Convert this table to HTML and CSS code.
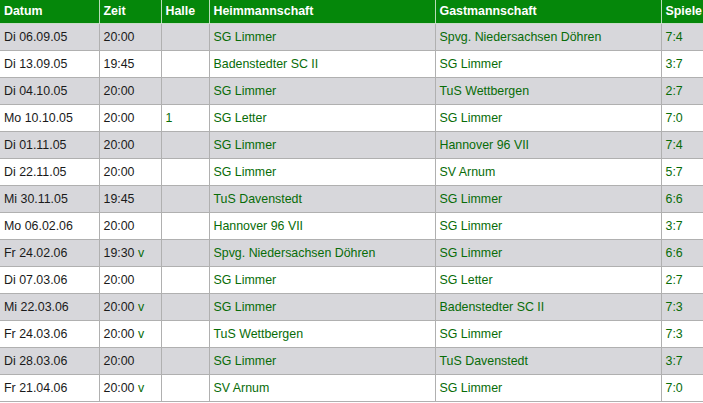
FILE: index.html
```html
<!DOCTYPE html>
<html>
<head>
<meta charset="utf-8">
<link rel="stylesheet" href="styles.css">
</head>
<body>
<div class="wrap">
<table class="games">
<colgroup>
<col class="c-date"><col class="c-time"><col class="c-hall"><col class="c-home"><col class="c-away"><col class="c-score">
</colgroup>
<thead>
<tr><th>Datum</th><th>Zeit</th><th>Halle</th><th>Heimmannschaft</th><th>Gastmannschaft</th><th>Spiele</th></tr>
</thead>
<tbody>
<tr class="alt"><td>Di 06.09.05</td><td>20:00</td><td></td><td class="g">SG Limmer</td><td class="g">Spvg. Niedersachsen Döhren</td><td class="g">7:4</td></tr>
<tr><td>Di 13.09.05</td><td>19:45</td><td></td><td class="g">Badenstedter SC II</td><td class="g">SG Limmer</td><td class="g">3:7</td></tr>
<tr class="alt"><td>Di 04.10.05</td><td>20:00</td><td></td><td class="g">SG Limmer</td><td class="g">TuS Wettbergen</td><td class="g">2:7</td></tr>
<tr><td>Mo 10.10.05</td><td>20:00</td><td class="g">1</td><td class="g">SG Letter</td><td class="g">SG Limmer</td><td class="g">7:0</td></tr>
<tr class="alt"><td>Di 01.11.05</td><td>20:00</td><td></td><td class="g">SG Limmer</td><td class="g">Hannover 96 VII</td><td class="g">7:4</td></tr>
<tr><td>Di 22.11.05</td><td>20:00</td><td></td><td class="g">SG Limmer</td><td class="g">SV Arnum</td><td class="g">5:7</td></tr>
<tr class="alt"><td>Mi 30.11.05</td><td>19:45</td><td></td><td class="g">TuS Davenstedt</td><td class="g">SG Limmer</td><td class="g">6:6</td></tr>
<tr><td>Mo 06.02.06</td><td>20:00</td><td></td><td class="g">Hannover 96 VII</td><td class="g">SG Limmer</td><td class="g">3:7</td></tr>
<tr class="alt"><td>Fr 24.02.06</td><td>19:30 <span class="g">v</span></td><td></td><td class="g">Spvg. Niedersachsen Döhren</td><td class="g">SG Limmer</td><td class="g">6:6</td></tr>
<tr><td>Di 07.03.06</td><td>20:00</td><td></td><td class="g">SG Limmer</td><td class="g">SG Letter</td><td class="g">2:7</td></tr>
<tr class="alt"><td>Mi 22.03.06</td><td>20:00 <span class="g">v</span></td><td></td><td class="g">SG Limmer</td><td class="g">Badenstedter SC II</td><td class="g">7:3</td></tr>
<tr><td>Fr 24.03.06</td><td>20:00 <span class="g">v</span></td><td></td><td class="g">TuS Wettbergen</td><td class="g">SG Limmer</td><td class="g">7:3</td></tr>
<tr class="alt"><td>Di 28.03.06</td><td>20:00</td><td></td><td class="g">SG Limmer</td><td class="g">TuS Davenstedt</td><td class="g">3:7</td></tr>
<tr><td>Fr 21.04.06</td><td>20:00 <span class="g">v</span></td><td></td><td class="g">SV Arnum</td><td class="g">SG Limmer</td><td class="g">7:0</td></tr>
</tbody>
</table>
</div>
</body>
</html>
```

FILE: styles.css
```css
html, body {
  margin: 0;
  padding: 0;
  background: #ffffff;
}
.wrap {
  width: 703px;
  height: 403px;
  overflow: hidden;
}
.games {
  border-collapse: collapse;
  table-layout: fixed;
  width: 740px;
  font-family: "Liberation Sans", Arial, sans-serif;
  font-size: 12.4px;
  color: #1a1a1a;
}
.c-date { width: 99px; }
.c-time { width: 62px; }
.c-hall { width: 48px; }
.c-home { width: 226px; }
.c-away { width: 226px; }
.c-score { width: 79px; }
.games th {
  background: #05870a;
  color: #ffffff;
  font-weight: bold;
  text-align: left;
  height: 23px;
  padding: 0 4px;
  border-left: 1px solid #b8dcb8;
  border-bottom: 1px solid #c8dcc8;
  box-sizing: border-box;
}
.games th:first-child { border-left: none; }
.games td {
  height: 26px;
  padding: 0 4px;
  border-left: 1px solid #b0b0b0;
  border-bottom: 1px solid #b0b0b0;
  vertical-align: middle;
  white-space: nowrap;
}
.games td:first-child { border-left: none; }
.games tr.alt td { background: #d7d7db; }
.g { color: #086c08; }
```
